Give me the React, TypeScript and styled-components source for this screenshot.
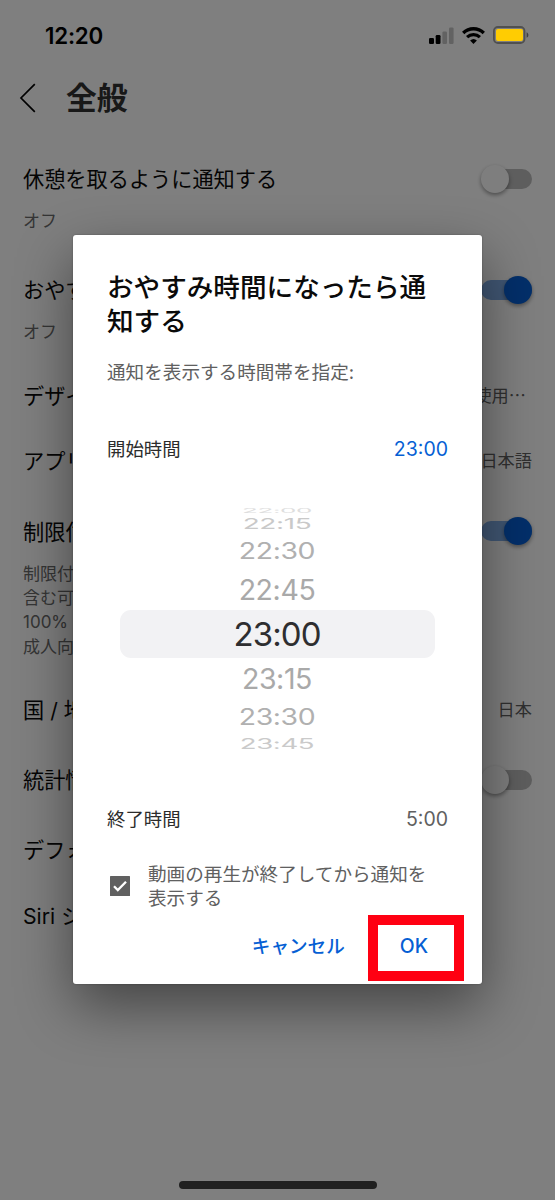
import React from 'react';
import styled, { createGlobalStyle } from 'styled-components';

const Global = createGlobalStyle`
  * { box-sizing: border-box; }
  body {
    margin: 0;
    background: #fff;
    font-family: Inter, "Noto Sans CJK JP", sans-serif;
  }
`;

const Screen = styled.div`
  position: relative;
  width: 555px;
  height: 1200px;
  overflow: hidden;
  background: #fff;
  color: #0a0a0a;
`;

const StatusBar = styled.div`
  display: flex;
  align-items: center;
  justify-content: space-between;
  height: 70px;
  padding: 0 26px 0 45px;
`;

const Clock = styled.span`
  padding-top: 1px;
  font-size: 22.3px;
  font-weight: 600;
  line-height: 28px;
  letter-spacing: -0.2px;
  color: #000;
`;

const StatusIcons = styled.div`
  display: flex;
  align-items: center;
  gap: 8px;
`;

const TitleBar = styled.header`
  display: flex;
  align-items: center;
  height: 56px;
  padding-left: 19px;
  margin-bottom: 24px;
`;

const PageTitle = styled.h1`
  margin: 0 0 0 30px;
  font-size: 30.8px;
  line-height: 44px;
  font-weight: 700;
  color: #303030;
`;

const Item = styled.section<{ $h: number; $top?: number }>`
  height: ${p => p.$h}px;
  padding: ${p => p.$top ?? 0}px 23px 0;
`;

const ItemLine = styled.div<{ $h: number }>`
  display: flex;
  align-items: center;
  justify-content: space-between;
  height: ${p => p.$h}px;
`;

const ItemLabel = styled.span`
  font-size: 21.2px;
  line-height: 30px;
  letter-spacing: -0.01px;
  white-space: nowrap;
`;

const ItemValue = styled.span<{ $inset?: number }>`
  margin-right: ${p => p.$inset ?? 0}px;
  padding-bottom: 2px;
  font-family: "Noto Sans CJK JP", sans-serif;
  font-size: 17.2px;
  line-height: 24px;
  color: #606060;
  white-space: nowrap;
`;

const ItemNote = styled.p`
  margin: 0;
  padding-top: 1px;
  font-size: 17px;
  line-height: 24.2px;
  color: #6a6a6a;
  white-space: pre;
`;

const Track = styled.span<{ $on?: boolean }>`
  display: flex;
  align-items: center;
  justify-content: ${p => (p.$on ? 'flex-end' : 'flex-start')};
  width: 51px;
  height: 20px;
  margin-bottom: 1px;
  border-radius: 10px;
  background: ${p =>
    p.$on
      ? 'linear-gradient(#82afe9, #82afe9)'
      : 'linear-gradient(to right, transparent 8px, #bcbcbc 8px)'};
`;

const Knob = styled.span<{ $on?: boolean }>`
  width: 28px;
  height: 28px;
  flex: none;
  border-radius: 50%;
  background: ${p => (p.$on ? '#065fd4' : '#fdfdfd')};
  box-shadow: 0 2px 4px rgba(0, 0, 0, 0.4);
`;

const HomeIndicator = styled.div`
  position: absolute;
  left: 179px;
  bottom: 11px;
  width: 198px;
  height: 8px;
  border-radius: 4px;
  background: #202020;
`;

const Scrim = styled.div`
  position: absolute;
  inset: 0;
  background: rgba(0, 0, 0, 0.5);
`;

const Dialog = styled.div`
  position: absolute;
  left: 73px;
  top: 235px;
  width: 409px;
  height: 749px;
  padding: 35px 34px 0;
  border-radius: 3px;
  background: #fff;
  box-shadow: 0 0 2px rgba(0, 0, 0, 0.3), 0 22px 56px rgba(0, 0, 0, 0.46);
`;

const DialogTitle = styled.h2`
  margin: 0;
  font-size: 26.6px;
  line-height: 34px;
  font-weight: 500;
  color: #0a0a0a;
  white-space: pre;
`;

const DialogText = styled.p`
  margin: 20px 0 49px;
  font-size: 18.6px;
  line-height: 28px;
  color: #606060;
`;

const TimeRow = styled.div`
  display: flex;
  justify-content: space-between;
  height: 28px;
  font-size: 18.4px;
  line-height: 28px;
  color: #2c2c2c;
`;

const TimeValue = styled.span<{ $active?: boolean }>`
  font-size: 19.5px;
  color: ${p => (p.$active ? '#065fd4' : '#606060')};
`;

const Wheel = styled.div`
  display: flex;
  flex-direction: column;
  align-items: center;
  margin: 45px 0 51px;
`;

const WheelSlot = styled.div<{ $h: number; $selected?: boolean }>`
  display: flex;
  align-items: center;
  justify-content: center;
  width: 315px;
  height: ${p => p.$h}px;
  padding: ${p => (p.$h < 10 ? 0 : 2)}px 1px 0 0;
  overflow: hidden;
  border-radius: ${p => (p.$selected ? 11 : 0)}px;
  background: ${p => (p.$selected ? '#f2f2f4' : 'transparent')};
`;

const WheelText = styled.span<{ $size: number; $squash: number; $color: string }>`
  flex: none;
  font-size: ${p => p.$size}px;
  line-height: 1.2;
  letter-spacing: ${p => (p.$size > 30 ? -0.9 : -0.4)}px;
  color: ${p => p.$color};
  transform: scaleY(${p => p.$squash});
`;

const CheckRow = styled.label`
  display: flex;
  align-items: center;
  gap: 18px;
  height: 48px;
  margin: 29px 0 22px;
  padding-left: 3px;
  font-size: 18.6px;
  line-height: 24px;
  color: #606060;
  white-space: pre;
`;

const Actions = styled.div`
  display: flex;
  justify-content: flex-end;
  gap: 55px;
  padding-right: 20px;
`;

const Action = styled.button`
  position: relative;
  padding: 0;
  border: 0;
  background: none;
  font: 500 18.6px/28px Inter, "Noto Sans CJK JP", sans-serif;
  color: #065fd4;
`;

const ConfirmAction = styled(Action)`
  font-size: 19.4px;
`;

const Highlight = styled.span`
  position: absolute;
  left: -32px;
  top: -17px;
  width: 96px;
  height: 66px;
  border: 10px solid #ff0012;
`;

const Signal = () => (
  <svg width="25" height="17" viewBox="0 0 25 17">
    <rect x="0" y="11" width="5" height="6" rx="1.3" fill="#000" />
    <rect x="6.7" y="8" width="4.8" height="9" rx="1.3" fill="#000" />
    <rect x="13.4" y="4.5" width="4.6" height="12.5" rx="1.3" fill="#c4c4c4" />
    <rect x="20" y="0.5" width="4.6" height="16.5" rx="1.3" fill="#c4c4c4" />
  </svg>
);

const Wifi = () => (
  <svg width="23" height="17" viewBox="0 0 23 17" fill="none" stroke="#000">
    <path d="M1.2 6a14.6 14.6 0 0 1 20.6 0" strokeWidth="3.3" />
    <path d="M5.1 10.2a9.2 9.2 0 0 1 12.8 0" strokeWidth="3.2" />
    <path d="M8.1 13.5a5 5 0 0 1 6.8 0L11.5 17z" fill="#000" stroke="none" />
  </svg>
);

const BatteryShell = () => (
  <svg width="36" height="18" viewBox="0 0 36 18">
    <rect x="0.9" y="1" width="30.6" height="16" rx="4" fill="none" stroke="#a0a0a0" strokeWidth="1.8" />
    <path d="M33.6 6.2c2.4 1 2.4 4.6 0 5.6z" fill="#808080" />
  </svg>
);

const BatteryCharge = styled.div`
  position: absolute;
  left: 496px;
  top: 29px;
  width: 27px;
  height: 12px;
  border-radius: 2px;
  background: #ffcc02;
`;

const Back = () => (
  <svg width="17" height="30" viewBox="0 0 17 30" fill="none" stroke="#000" strokeWidth="1.7">
    <path d="M15.8 1.2L2 15l13.8 13.8" />
  </svg>
);

const CheckMark = () => (
  <svg width="20" height="20" viewBox="0 0 20 20">
    <rect width="20" height="20" rx="0.5" fill="#606060" />
    <path d="M4 10.3l3.8 3.8L16 5.8" fill="none" stroke="#fff" strokeWidth="2.3" />
  </svg>
);

const Toggle = ({ on }: { on?: boolean }) => (
  <Track $on={on}>
    <Knob $on={on} />
  </Track>
);

const wheel = [
  { t: '22:00', h: 5, size: 26, squash: 0.24, color: '#dedede' },
  { t: '22:15', h: 20, size: 28, squash: 0.53, color: '#c9c9c9' },
  { t: '22:30', h: 35, size: 28.4, squash: 0.79, color: '#b0b0b0' },
  { t: '22:45', h: 42, size: 28.5, squash: 0.98, color: '#a9a9a9' },
  { t: '23:00', h: 48, size: 33, squash: 1, color: '#2e2e30' },
  { t: '23:15', h: 41, size: 28.5, squash: 0.98, color: '#a9a9a9' },
  { t: '23:30', h: 35, size: 28.4, squash: 0.79, color: '#b0b0b0' },
  { t: '23:45', h: 20, size: 27.6, squash: 0.51, color: '#cacaca' },
];

export default function App() {
  return (
    <Screen>
      <Global />
      <StatusBar>
        <Clock>12:20</Clock>
        <StatusIcons>
          <Signal />
          <Wifi />
          <BatteryShell />
        </StatusIcons>
      </StatusBar>
      <TitleBar>
        <Back />
        <PageTitle>全般</PageTitle>
      </TitleBar>

      <Item $h={111}>
        <ItemLine $h={58}>
          <ItemLabel>休憩を取るように通知する</ItemLabel>
          <Toggle />
        </ItemLine>
        <ItemNote>オフ</ItemNote>
      </Item>
      <Item $h={102}>
        <ItemLine $h={58}>
          <ItemLabel>おやす</ItemLabel>
          <Toggle on />
        </ItemLine>
        <ItemNote>オフ</ItemNote>
      </Item>
      <Item $h={65}>
        <ItemLine $h={65}>
          <ItemLabel>デザイ</ItemLabel>
          <ItemValue $inset={6}>使用⋯</ItemValue>
        </ItemLine>
      </Item>
      <Item $h={66}>
        <ItemLine $h={66}>
          <ItemLabel>アプリ</ItemLabel>
          <ItemValue>日本語</ItemValue>
        </ItemLine>
      </Item>
      <Item $h={183} $top={8}>
        <ItemLine $h={59}>
          <ItemLabel>制限付</ItemLabel>
          <Toggle on />
        </ItemLine>
        <ItemNote>{'制限付\n含む可\n100%\n成人向'}</ItemNote>
      </Item>
      <Item $h={66}>
        <ItemLine $h={66}>
          <ItemLabel>国 / 地</ItemLabel>
          <ItemValue>日本</ItemValue>
        </ItemLine>
      </Item>
      <Item $h={74}>
        <ItemLine $h={74}>
          <ItemLabel>統計情</ItemLabel>
          <Toggle />
        </ItemLine>
      </Item>
      <Item $h={66}>
        <ItemLine $h={66}>
          <ItemLabel>デフォ</ItemLabel>
        </ItemLine>
      </Item>
      <Item $h={66}>
        <ItemLine $h={66}>
          <ItemLabel>Siri シ</ItemLabel>
        </ItemLine>
      </Item>

      <Scrim />
      <BatteryCharge />
      <HomeIndicator />

      <Dialog>
        <DialogTitle>{'おやすみ時間になったら通\n知する'}</DialogTitle>
        <DialogText>通知を表示する時間帯を指定:</DialogText>
        <TimeRow>
          <span>開始時間</span>
          <TimeValue $active>23:00</TimeValue>
        </TimeRow>
        <Wheel>
          {wheel.map(w => (
            <WheelSlot key={w.t} $h={w.h} $selected={w.t === '23:00'}>
              <WheelText $size={w.size} $squash={w.squash} $color={w.color}>
                {w.t}
              </WheelText>
            </WheelSlot>
          ))}
        </Wheel>
        <TimeRow>
          <span>終了時間</span>
          <TimeValue>5:00</TimeValue>
        </TimeRow>
        <CheckRow>
          <CheckMark />
          <span>{'動画の再生が終了してから通知を\n表示する'}</span>
        </CheckRow>
        <Actions>
          <Action>キャンセル</Action>
          <ConfirmAction>
            OK
            <Highlight />
          </ConfirmAction>
        </Actions>
      </Dialog>
    </Screen>
  );
}
